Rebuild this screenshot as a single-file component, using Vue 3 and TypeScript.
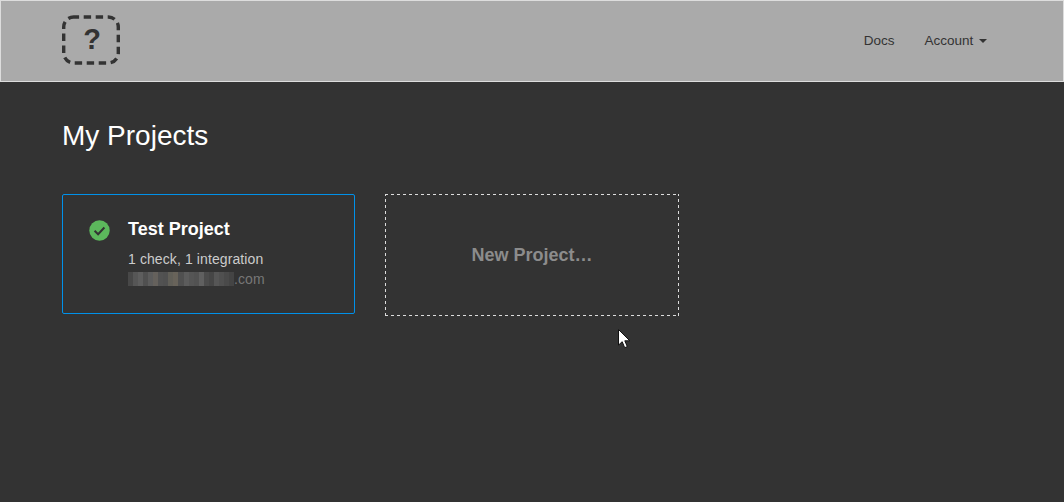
<script setup lang="ts">
// pixelated strip standing in for the blurred part of the email
const blurCells: string[] = [
  '#484848', '#565656', '#5e5e5e', '#505050', '#5c5c5c', '#65615c', '#525252', '#505050',
  '#615f58', '#68635a', '#505050', '#5c5c5c', '#555', '#525252', '#606060', '#4c4c4c',
  '#464646', '#565656', '#505050', '#4a4a4a', '#444'
]
</script>

<template>
  <div class="page">
    <nav class="topbar">
      <svg class="logo" width="58" height="50" viewBox="0 0 58 50">
        <rect x="1.7" y="2" width="54.6" height="46" rx="10" fill="none" stroke="#333" stroke-width="3.4" stroke-dasharray="7.4 4.6" stroke-dashoffset="2" />
      </svg>
      <span class="logo-mark">?</span>
      <div class="links">
        <a>Docs</a>
        <a>Account <i class="caret"></i></a>
      </div>
    </nav>

    <main class="content">
      <h1>My Projects</h1>
      <div class="cards">
        <section class="card">
          <svg class="status" width="21" height="21" viewBox="0 0 21 21">
            <circle cx="10.5" cy="10.5" r="10.2" fill="#5cb85c" />
            <path d="M5.6 10.8l3.5 3.4 6.3-6.7" fill="none" stroke="#333" stroke-width="2" />
          </svg>
          <div class="info">
            <h2>Test Project</h2>
            <p class="counts">1 check, 1 integration</p>
            <p class="owner">
              <span class="blur">
                <span v-for="(c, i) in blurCells" :key="i" :style="{ background: c }"></span>
              </span>.com
            </p>
          </div>
        </section>
        <section class="card-new">New Project…</section>
      </div>
    </main>

    <svg class="cursor" width="13" height="20" viewBox="0 0 13 20">
      <path d="M.5.5v15.6l3.7-3.4 2.5 6 2.6-1.1-2.5-5.8h5z" fill="#fff" stroke="#111" stroke-width="1" />
    </svg>
  </div>
</template>

<style>
html, body {
  margin: 0;
  background: #333;
}
</style>

<style scoped>
.page {
  position: relative;
  height: 502px;
  overflow: hidden;
  background: #333;
  font-family: "Liberation Sans", Arial, sans-serif;
}

.topbar {
  height: 80px;
  border: 1px solid #ddd;
  background: #aaa;
  display: flex;
  align-items: center;
  padding: 0 76px 0 61px;
  position: relative;
}

.logo {
  display: block;
  margin-top: -2px;
}

.logo-mark {
  position: absolute;
  left: 62px;
  top: 21px;
  width: 58px;
  text-align: center;
  font-size: 29px;
  line-height: 34px;
  font-weight: bold;
  color: #333;
}

.links {
  margin-left: auto;
  display: flex;
  gap: 30px;
  font-size: 13.5px;
  line-height: 20px;
  color: #333;
  margin-top: -1px;
}

.caret {
  display: inline-block;
  margin-left: 2px;
  vertical-align: middle;
  border-top: 4px solid #333;
  border-left: 4px solid transparent;
  border-right: 4px solid transparent;
}

.content {
  padding: 39px 0 0 62px;
}

h1 {
  margin: 0;
  font-size: 28px;
  line-height: 30px;
  font-weight: normal;
  color: #fff;
}

.cards {
  display: flex;
  align-items: flex-start;
  gap: 30px;
  margin-top: 43px;
}

.card {
  box-sizing: border-box;
  width: 293px;
  height: 120px;
  border: 1px solid #0091ea;
  border-radius: 2px;
  display: flex;
  padding: 25px 0 0 26px;
}

.status {
  margin-right: 18px;
  flex: none;
}

h2 {
  margin: -1px 0 0;
  font-size: 18px;
  line-height: 20px;
  font-weight: bold;
  color: #fff;
}

.counts, .owner {
  margin: 0;
  font-size: 14px;
  line-height: 20px;
  letter-spacing: .1px;
}

.counts {
  margin-top: 10px;
  color: #ccc;
}

.owner {
  color: #777;
  display: flex;
  align-items: center;
}

.blur {
  display: flex;
  width: 106px;
  height: 14px;
  filter: blur(.6px);
}

.blur span {
  flex: 1;
}

.card-new {
  box-sizing: border-box;
  width: 294px;
  height: 122px;
  /* 3px on, 3px off: wider spacing than the browser's own dashed border */
  background:
    repeating-linear-gradient(90deg, #ddd 0 3px, transparent 3px 6px) 0 0 / 100% 1px no-repeat,
    repeating-linear-gradient(90deg, #ddd 0 3px, transparent 3px 6px) 0 100% / 100% 1px no-repeat,
    repeating-linear-gradient(0deg, #ddd 0 3px, transparent 3px 6px) 0 0 / 1px 100% no-repeat,
    repeating-linear-gradient(0deg, #ddd 0 3px, transparent 3px 6px) 100% 0 / 1px 100% no-repeat;
  display: flex;
  align-items: center;
  justify-content: center;
  font-size: 18px;
  font-weight: bold;
  color: #8c8c8c;
}

.cursor {
  position: absolute;
  left: 618px;
  top: 329px;
}
</style>
